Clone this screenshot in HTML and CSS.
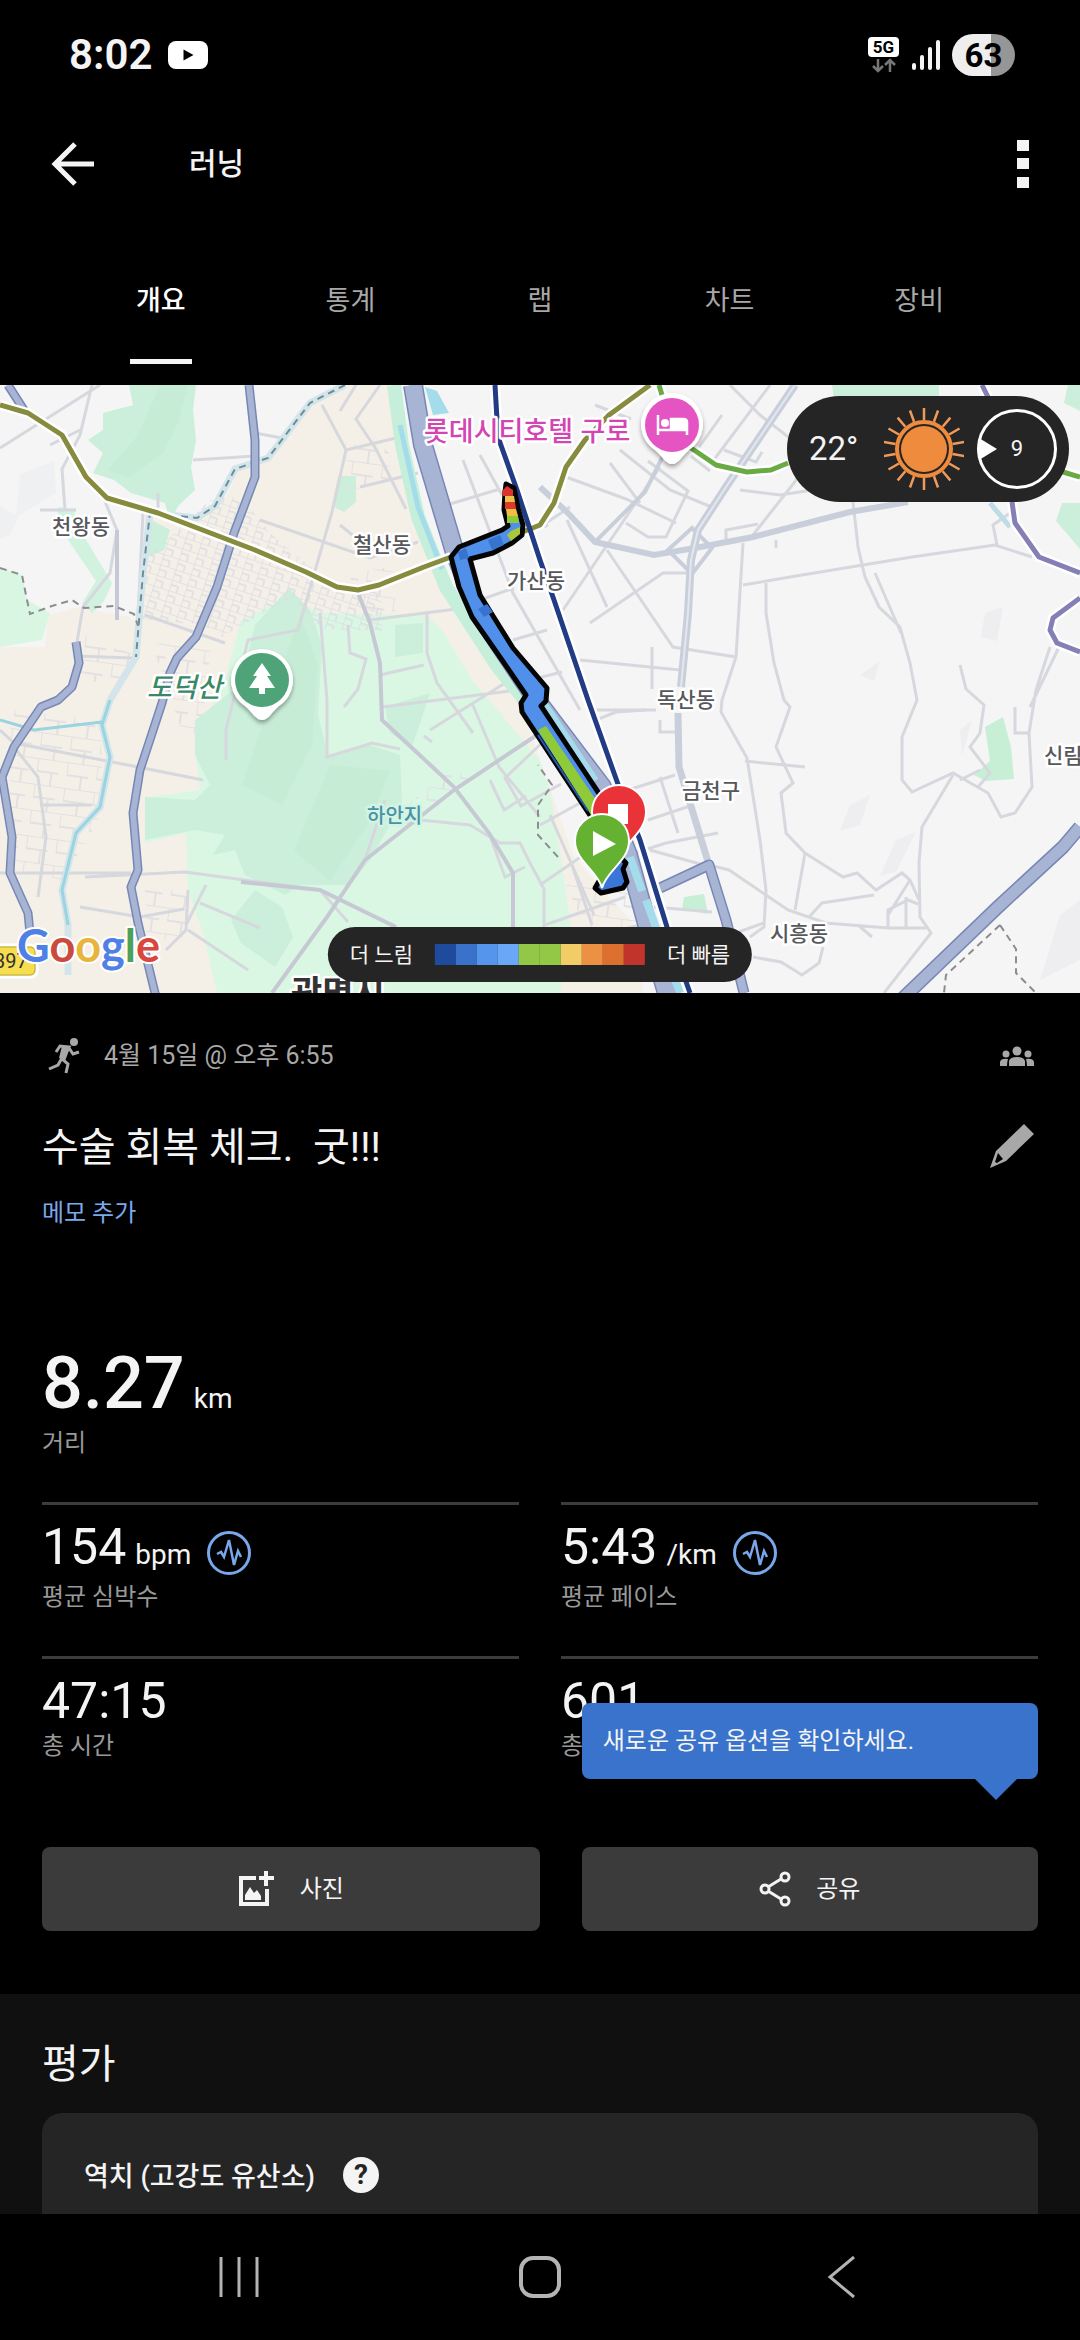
FILE: index.html
```html
<!DOCTYPE html>
<html lang="ko">
  <head>
    <meta charset="UTF-8">
    <meta name="viewport" content="width=device-width, initial-scale=1.0">
    <title>러닝</title>
    <link rel="stylesheet" href="styles.css">
  </head>
  <body>
    <div class="status-bar">
      <div class="status-left">
        <span class="clock">8:02</span>
        <svg width="40" height="28" viewBox="0 0 40 28"><rect width="40" height="28" rx="8" fill="#fff"/><path d="M15.500 8.500v11l10-5.500z" fill="#000"/></svg>
      </div>
      <div class="status-right">
        <svg class="network" width="32" height="36" viewBox="0 0 32 36">
          <rect width="31" height="20" rx="4" fill="#fff"/>
          <text class="network-text" x="15.500" y="16" text-anchor="middle">5G</text>
          <path d="M10 22v12M5 29l5 5 5-5M22 35V23M17 28l5-5 5 5" fill="none" stroke="#777" stroke-width="2.500"/>
        </svg>
        <svg width="28" height="30" viewBox="0 0 28 30"><path d="M2 25v3M10 17v11M18 9v19M26 2v26" stroke="#f4f4f4" stroke-width="4" stroke-linecap="round"/></svg>
        <span class="battery">63</span>
      </div>
    </div>

    <header class="app-bar">
      <button class="icon-btn" aria-label="뒤로">
        <svg width="44" height="44" viewBox="0 0 44 44"><path d="M43 22H5M24 2L4 22l20 20" fill="none" stroke="#f4f4f4" stroke-width="5"/></svg>
      </button>
      <h1>러닝</h1>
      <button class="icon-btn" aria-label="더보기">
        <svg width="12" height="48" viewBox="0 0 12 48"><path d="M0 0h12v11H0zM0 18h12v11H0zM0 37h12v11H0z" fill="#f4f4f4"/></svg>
      </button>
    </header>

    <nav class="tabs">
      <a class="tab active" href="#overview">개요</a>
      <a class="tab" href="#stats">통계</a>
      <a class="tab" href="#laps">랩</a>
      <a class="tab" href="#charts">차트</a>
      <a class="tab" href="#gear">장비</a>
    </nav>

    <section class="map">
      <svg class="map-canvas" viewBox="0 0 1080 608">
        <defs>
          <pattern id="streets" width="16" height="11" patternUnits="userSpaceOnUse" patternTransform="rotate(18)">
            <path d="M0 0h16M0 0v11M8 5v6M0 5h8" stroke="#dddde2" stroke-width="1.500" fill="none"/>
          </pattern>
          <pattern id="streets-wide" width="30" height="26" patternUnits="userSpaceOnUse" patternTransform="rotate(8)">
            <path d="M0 0h30M0 0v14M15 12v14M0 13h22" stroke="#e2e0e2" stroke-width="2" fill="none"/>
          </pattern>
          <filter id="shadow" x="-30%" y="-30%" width="160%" height="160%">
            <feDropShadow dx="0" dy="3" stdDeviation="2" flood-opacity="0.35"/>
          </filter>
        </defs>

        <rect width="1080" height="608" fill="#f5f5f6"/>

        <!-- land -->
        <path d="M0 608V262h45l3-32 32-8 48 10 12 8 5-112 55 7 25-20 15-35 28-5 42-57 35-18h44l24 128 31 74 72 103 58 167 59 66 10 70z" fill="#f5f0e7"/>
        <path d="M0 183l22 7 5 25 23 13-8 27-42 7z" fill="#d9f6e3"/>
        <path d="M129 0h67l-3 25 3 30-5 27 4 23-16 15-9 16-5-18-34-10-17-13-21-7 10-20-15-13 15-10V28l30-8z" fill="#cbefda"/>
        <path d="M160 0h28l-10 38-15 30-35 25-20-8 30-35z" fill="#c4ead3" opacity=".6"/>
        <path d="M58 122l16 2 2 14 36 60-8 18-12 12-10-10 14-22-38-56z" fill="#d0f2de"/>
        <path d="M148 133l22 12-6 20-18 8z" fill="#cbefda"/>
        <path d="M338 91l18 0 0 26-12 10-12-6z" fill="#cbefda"/>
        <path d="M289 212l31 16 107 2 17 18 28 47 68 80 10 30 11 67 10 70-11 66H217l-14-60-15-43-2-57-41 10 5-46 50-7-4-33 7-34 22-43 16-60z" fill="#daf7e4"/>
        <path d="M289 203l21 22 12 35-4 70 10 40 42-10 30 10 2 50-12 20-20 35-20 25h-50l-15 10-40-20-10-25-22 5 12-20-30-5-50 10v-43l50 3 15-15-15-30v-35l45-35 15-60z" fill="#cbefda"/>
        <path d="M300 230l18 50-6 80-30 60-40-20 20-60zM330 380l60 6-20 50-40 60-36-30z" fill="#c4ead3" opacity=".6"/>
        <path d="M255 505l27 17 11 30-18 30-34-24-10-23zM395 240l28-2v30l-28 4zM385 322l45-14-18 54-22-14z" fill="#cbefda"/>
        <path d="M832 0h107v14H834zM1068 0h12v26l-16-8zM1062 118h18v46l-24-28z" fill="#cbefda"/>
        <path d="M985 342l18-10 8 30 3 32-28 2-12-6 16-14zM684 512l20-3 4 20-26-5z" fill="#c6efd6"/>
        <path d="M850 420l20-10-10 30-20 6zM896 455l20-8-20 40-16 4zM960 345l12-10-10 36zM985 228l18-6-6 34-16-4zM860 290l20-14-6 20zM1060 530l20-15v60l-40 20z" fill="#eeeef0"/>
        <path d="M20 90l34-14 2 32-40 24zM0 120l18 12-8 18-10 4z" fill="#eff0f1"/>
        <path d="M140 180l80-74 26 12 24 30 72 60 40-2v40l-60-2-30-32-70 40-20-12-60-6z" fill="url(#streets)"/>
        <path d="M10 325l90 10 4 90-40 70-54-10zM145 500l45 8-8 50-36-6zM85 250l50 20-20 36-36-16zM395 430l60-48 14 12-60 50z" fill="url(#streets-wide)"/>
        <path d="M350 58l38 6 4 34-50 8zM348 188l44-6 4 44-26 6zM566 500l60-10 12 50-50 8zM152 260l60-10-10 100-20-4z" fill="url(#streets-wide)"/>

        <!-- minor roads -->
        <g fill="none" stroke="#d6d8de" stroke-width="3">
          <path d="M0 63L100 0M92 0L80 50l-18 34 3 41M50 60l30-15M103 112l14 33-7 43-27 34-6 35M40 125h36M158 108v22M193 75l62-4M255 48l32 6"/>
          <path d="M322 20l24 45-14 62-34 118-50 10-22 90 0 30M346 65l50-12M356 0l-16 26M380 0l-24 34 20 30 30 60M360 102l58-14M260 135l110 38 48-16M340 140l25 20"/>
          <path d="M143 128l-5 102-4 42-24 43M76 257l0 14 56 2M145 230l80 28M0 345l14 13 124 24 65 13M0 488h131M85 492l100-5 135 18M80 522l60 10 44-8M186 540l20-40M188 505l-2 40-20 20M40 420h52M14 362l24 30 8 60-8 60"/>
          <path d="M370 235l102-13M427 228v40l10 30 36 50M380 290l44-10M320 228l7 87v57l45-14 28 6M348 240l2 28 16 6-8 30-14 18M382 322l128-16M472 318l27 64 41 50M430 345l80-50M432 357l-8-6M420 435l50 5 30 18h20l10 20 14 26v40M489 448l16 44 20-10M490 395l14 30 22-14"/>
          <path d="M188 545l60 40M200 518l60 25M320 505l28 32M365 475l20-60M545 355l-40 38 16 28 40-22M540 440l40-22M540 500l64-44M550 430l44 100M572 480l20 60M545 540l80-28M560 560l80-20"/>
          <path d="M463 75l50 133 67 117M480 70l22 40M440 122l60-18M498 160l50-20M513 255l34-10M530 295l32-8M580 275l100 10M567 135l40 87M607 165l66 97 63 10M563 225L660 82M590 238l73-50h24M480 215l34-12M540 180l-12-30 42-28M652 262v42M596 325h60"/>
          <path d="M566 92l60 22 50 24M620 65l50 40 44 18M595 20l36 14M640 118l-30-40M626 138l22 14h18l22-46-40-30M730 0l30 30 36 28 10-4M724 65l32 12 6-10M770 0l-60 80M740 105l40 5 52-8M753 150l44-56M726 155v-10l32-6M776 155v8"/>
          <path d="M722 30l-30 42 18 14M875 188l26 60M997 160l-4-20 20-14M743 200l59-10 110-18 83-12 37 12M853 117l5 45 7 30 14 30 21 20 10 36 7 37-15 37v43l10 12 41-19 35 20 13 24 14-4 17-26-3-54 7-43 14-43M1060 260l-30 62"/>
          <path d="M953 390l-31 52-3 36 1 54 11 16-47 60M743 158l-7 114-14 43-1 12 26 46 13 82 6 50-2 37-14 10M766 198v30l8 50 10 37 6 7-14 40 17 36-12 10 5 40 19 20 38 24 14-4 19 17 26-17 8 7 9 20"/>
          <path d="M809 532l13-14 52-8M709 480l20 5 59 40 38 13 62 5h38M805 468l-10 57M753 572l28 5 21 13 17-12 4-16M654 522l58 5M730 550l34-12M745 376l60 6M888 543v-18l20-10 10 4M910 495l-22 35M906 512v30M858 540l14 12"/>
          <path d="M660 335v12h20M625 406l50-16M660 392l18 56M622 472l44-14 52-10M648 435l42-14M650 465l50 14M596 335l20-8 30-2M960 280l6 24 18 16-4 28-10 14 20 26-12 14M1015 322v26h14M960 395l20-10"/>
        </g>
        <g fill="none" stroke="#c6c8d3" stroke-width="4">
          <path d="M272 608l55-76 38-57 89-70 86-57M358 208l12 30 10 40 2 57 72 67 35 46 24 40v54M241 497l79 8 76 37M117 145l0 90"/>
        </g>
        <g fill="none" stroke="#c9cfda">
          <path d="M795 0l-42 62-27 40-28 43-7 30-3 53-7 74" stroke-width="8"/>
          <path d="M540 102l28 26 27 29 59 13 41-7 58-11 97-25 58-10" stroke-width="6"/>
          <path d="M678 328l1 54 30 98" stroke-width="7"/>
          <path d="M668 165l24-22 20 20-20 26z" stroke-width="4"/>
          <path d="M595 157l50-50 30-60" stroke-width="4"/>
        </g>
        <path d="M795 0l-42 62-27 40-28 43-7 30-3 53-7 74" fill="none" stroke="#e3e7ef" stroke-width="2"/>

        <!-- streams -->
        <g fill="none">
          <path d="M345 0l-35 18-42 55-18 6-15 5-20 37-18 12-47-5-7 60-7 84-26 43M110 315l-8 25 8 32-10 50-24 26-14 57 6 35v50" stroke="#d3e5ea" stroke-width="7"/>
          <path d="M110 315l-8 25 8 32-10 50-24 26-14 57 6 35M0 335l34 10 68-8" stroke="#99d4e0" stroke-width="3"/>
          <path d="M345 0l-35 18-42 55-18 6-15 5-20 37-18 12-47-5-7 60-7 84" stroke="#6b8f99" stroke-width="2" stroke-dasharray="7 5"/>
          <path d="M0 183l22 7 5 25 3 14 22-8 20-6 12 8 30-2 20 8 4 12M558 472l-20-22 0-30 14-20-14-20M1000 540l-54 50-2 18M1000 540l16 24v24l20 20" stroke="#8d8d8f" stroke-width="2" stroke-dasharray="7 5"/>
          <path d="M394 0l8 60 16 72 28 70 52 80 36 44" stroke="#c5efda" stroke-width="14"/>
          <path d="M400 40l18 82 24 62" stroke="#a4dceb" stroke-width="5"/>
          <path d="M425 2l12 4 12 22-16 2z" fill="#a5dceb"/>
          <path d="M990 118l20 24" stroke="#bddce6" stroke-width="5"/>
        </g>

        <!-- highways -->
        <g fill="none" stroke="#7787b5" stroke-linejoin="round">
          <path d="M413 0l10 60 32 108 25 62 60 90 62 82 26 68 22 80 18 62" stroke-width="20"/>
          <path d="M249 0l6 55v37l-21 56-17 54-21 50-19 21-7 15-8 30-22 67-7 43 5 57-7 17 7 36 18 74M76 257l3 21-7 24-14 13-17 7-27 40-12 30 10 60-2 36 18 40 2 20M8 0l16 25" stroke-width="9"/>
          <path d="M1080 442l-17 20-65 60-98 94" stroke-width="14"/>
          <path d="M660 503l49-23 17 55 18 73" stroke-width="11"/>
        </g>
        <g fill="none" stroke="#a7b4d3" stroke-linejoin="round">
          <path d="M413 0l10 60 32 108 25 62 60 90 62 82 26 68 22 80 18 62" stroke-width="17"/>
          <path d="M249 0l6 55v37l-21 56-17 54-21 50-19 21-7 15-8 30-22 67-7 43 5 57-7 17 7 36 18 74M76 257l3 21-7 24-14 13-17 7-27 40-12 30 10 60-2 36 18 40 2 20M8 0l16 25" stroke-width="6"/>
          <path d="M1080 442l-17 20-65 60-98 94" stroke-width="11"/>
          <path d="M660 503l49-23 17 55 18 73" stroke-width="8"/>
        </g>
        <path d="M543 318l52 78M630 472l12 34M646 515l34 93" stroke="#a5dceb" stroke-width="8" fill="none"/>

        <!-- subway lines -->
        <g fill="none" stroke="#fff" stroke-width="10">
          <path d="M0 20l28 8 34 22 24 42 21 21 51 15 97 37 51 22 31 15 21 3 21-5 45-18 27-10M520 148l20-8 14-22 12-36 19-27 24-25 41-30"/>
          <path d="M495 0l3 52 19 53 23 70 14 40 34 100 31 87 21 53 27 87 23 66"/>
          <path d="M659 0l6 20 26 43 25 17 31 7 24-2 17-7M1063 87l17 5"/>
          <path d="M982 0l6 12M1012 117l3 21 24 34 41 16M1080 213l-27 20-3 12 7 13 23 9"/>
        </g>
        <g fill="none" stroke-width="5" stroke-linejoin="round">
          <path d="M0 20l28 8 34 22 24 42 21 21 51 15 97 37 51 22 31 15 21 3 21-5 45-18 27-10M520 148l20-8 14-22 12-36 19-27 24-25 41-30" stroke="#868b3e"/>
          <path d="M495 0l3 52 19 53 23 70 14 40 34 100 31 87 21 53 27 87 23 66" stroke="#213c85"/>
          <path d="M659 0l6 20 26 43 25 17 31 7 24-2 17-7M1063 87l17 5" stroke="#6aaa44"/>
          <path d="M982 0l6 12M1012 117l3 21 24 34 41 16M1080 213l-27 20-3 12 7 13 23 9" stroke="#8480b5"/>
        </g>

        <!-- recorded track -->
        <g stroke-linejoin="round">
          <path d="M618 470l8 8-3 6 4 13-4 6-22 5-6-5 7-12z" fill="#3a76d8" stroke="#000" stroke-width="5"/>
          <path d="M506 99l8 4 4 20 5 17-1 10-10 8-19 10-23 6 10 36 33 53 34 40-1 13-5 5 61 92-9 22-71-108-1-9 5-8-24-35-30-43-13-30-8-30 8-10 43-17 6-4-4-16 1-18z" fill="#5090ea" stroke="#050505" stroke-width="5"/>
          <path d="M502 106l5-5 6 4v6h-10z" fill="#d9352c"/>
          <path d="M505 111h9l1 6h-10z" fill="#efc04c"/>
          <path d="M505 117h10l1 7h-11z" fill="#df3a26"/>
          <path d="M506 124h10l2 7h-11z" fill="#f0bd45"/>
          <path d="M507 131h11l1 7h-12z" fill="#8fca38"/>
          <path d="M511 146l9-4v7l-9 7-4-6z" fill="#a8c83a"/>
          <path d="M488 155l12-5 4 10-12 5zM458 167l8-4 3 10-9 2zM478 224l9-5 6 8-9 5z" fill="#3873cf"/>
          <path d="M538 345l8-4 52 77-7 12z" fill="#8fca38"/>
          <path d="M538 350l50 76" stroke="#275aa8" stroke-width="2" fill="none"/>
        </g>

        <!-- place labels -->
        <g class="place">
          <text x="52" y="149">천왕동</text>
          <text x="353" y="167">철산동</text>
          <text x="507" y="203">가산동</text>
          <text x="657" y="322">독산동</text>
          <text x="682" y="413">금천구</text>
          <text x="1044" y="378">신림동</text>
          <text x="770" y="556">시흥동</text>
          <text class="place-lake" x="367" y="438">하안지</text>
          <text class="place-hotel" x="424" y="56">롯데시티호텔 구로</text>
          <text class="place-hill" x="147" y="312">도덕산</text>
          <text class="place-city" x="291" y="620">광명시</text>
        </g>

        <g filter="url(#shadow)" fill="#fff">
          <path d="M672 79c-6 0-9-7-17-14a31 31 0 1 1 34 0c-8 7-11 14-17 14z"/>
          <path d="M262 335c-6 0-9-7-17-14a31 31 0 1 1 34 0c-8 7-11 14-17 14z"/>
        </g>
        <circle cx="672" cy="40" r="27" fill="#e455c3"/>
        <path d="M658 30v20M658 45h29M687 50V37q0-3-4-3h-12v10" fill="none" stroke="#fff" stroke-width="2.500"/>
        <path d="M671 34h13l3 3v8h-16z" fill="#fff"/>
        <circle cx="665" cy="38" r="4" fill="#fff"/>
        <circle cx="262" cy="295" r="27" fill="#4fa379"/>
        <path d="M262 278l9 13h-4l8 12h-10v6h-6v-6h-10l8-12h-4z" fill="#fff"/>

        <!-- finish and start pins -->
        <g stroke="#fff" stroke-width="2">
          <path d="M619 474c-4-16-27-26-27-47a27 27 0 0 1 54 0c0 21-23 31-27 47z" fill="#ea3338"/>
        </g>
        <path d="M608 419h20v20h-20z" fill="#fff"/>
        <path d="M602 503c-4-17-27-27-27-47a27 27 0 0 1 54 0c0 20-23 30-27 47z" fill="#65b132" stroke="#fff" stroke-width="2"/>
        <path d="M593 446v25l23-12z" fill="#fff"/>

        <rect x="-14" y="560" width="51" height="32" rx="6" fill="#f7dd50" stroke="#fff" stroke-width="3"/>
        <rect x="-14" y="562" width="49" height="28" rx="5" fill="none" stroke="#b9a640" stroke-width="1"/>
        <text class="route-no" x="-6" y="583">397</text>
        <text class="google" x="17" y="577"><tspan fill="#4f80e6">G</tspan><tspan fill="#ca4a3e">o</tspan><tspan fill="#e7b53c">o</tspan><tspan fill="#4f80e6">g</tspan><tspan fill="#4fa058">l</tspan><tspan fill="#d9463b">e</tspan></text>
      </svg>

      <div class="weather">
        <span class="temp">22°</span>
        <svg width="80" height="84" viewBox="-40 -42 80 84">
          <circle r="23" fill="#ef8b3c"/>
          <circle r="27" fill="none" stroke="#ef8b3c" stroke-width="4"/>
          <g stroke="#ef9a5a" stroke-width="2.500">
            <path d="M0-29v-12M0 29v12"/>
            <path d="M0-29v-12M0 29v12" transform="rotate(20)"/>
            <path d="M0-29v-12M0 29v12" transform="rotate(40)"/>
            <path d="M0-29v-12M0 29v12" transform="rotate(60)"/>
            <path d="M0-29v-12M0 29v12" transform="rotate(80)"/>
            <path d="M0-29v-12M0 29v12" transform="rotate(100)"/>
            <path d="M0-29v-12M0 29v12" transform="rotate(120)"/>
            <path d="M0-29v-12M0 29v12" transform="rotate(140)"/>
            <path d="M0-29v-12M0 29v12" transform="rotate(160)"/>
          </g>
        </svg>
        <div class="wind">
          <svg class="wind-arrow" width="20" height="22" viewBox="0 0 20 22"><path d="M2 0l18 11L2 22Q-1 11 2 0z" fill="#fff"/></svg>
          9
        </div>
      </div>

      <div class="legend">
        <span>더 느림</span>
        <div class="legend-bar">
          <i class="c1"></i><i class="c2"></i><i class="c3"></i><i class="c4"></i><i class="c5"></i><i class="c5"></i><i class="c6"></i><i class="c7"></i><i class="c8"></i><i class="c9"></i>
        </div>
        <span>더 빠름</span>
      </div>
    </section>

    <main class="details">
      <div class="meta">
        <svg width="36" height="36" viewBox="0 0 36 36">
          <circle cx="27" cy="4" r="4" fill="#a8a8a8"/>
          <path d="M9 14l4-6 9 1-7 12 6 5-2 9M22 10l4 6 6-2M15 20l-4 7-9 4" fill="none" stroke="#a8a8a8" stroke-width="3"/>
          <path d="M15 8l8 2-5 13-6-3z" fill="#a8a8a8"/>
        </svg>
        <span class="date">4월 15일 @ 오후 6:55</span>
        <svg class="privacy" width="34" height="20" viewBox="0 0 34 20">
          <g fill="#a8a8a8"><circle cx="17" cy="5" r="4.500"/><circle cx="6" cy="8" r="3.500"/><circle cx="28" cy="8" r="3.500"/><path d="M9 20v-5q1-4 8-4t8 4v5zM0 20v-4q1-4 8-3-1 3-1 7zM34 20v-4q-1-4-8-3 1 3 1 7z"/></g>
        </svg>
      </div>

      <div class="title-row">
        <h2>수술 회복 체크.&nbsp; 굿!!!</h2>
        <button class="icon-btn" aria-label="편집">
          <svg width="46" height="44" viewBox="0 0 46 44"><path fill-rule="evenodd" d="M35 0l10 10-28 27-16 7 6-17zM9 29l-3 9 2 1 6-4z" fill="#a8a8a8"/></svg>
        </button>
      </div>
      <a class="memo" href="#memo">메모 추가</a>

      <div class="distance">
        <div class="big"><strong>8.27</strong><small>km</small></div>
        <div class="label">거리</div>
      </div>

      <div class="stats">
        <div class="stat">
          <div class="value">
            <span>154<small>bpm</small></span>
            <svg class="pulse" width="44" height="44" viewBox="0 0 44 44"><circle cx="22" cy="22" r="20.500" fill="none" stroke="#78a7ea" stroke-width="3"/><path d="M10 23l4-2 3 5 5-17 5 25 4-14 3 6" fill="none" stroke="#78a7ea" stroke-width="2.500"/></svg>
          </div>
          <div class="label">평균 심박수</div>
        </div>
        <div class="stat">
          <div class="value">
            <span>5:43<small>/km</small></span>
            <svg class="pulse" width="44" height="44" viewBox="0 0 44 44"><circle cx="22" cy="22" r="20.500" fill="none" stroke="#78a7ea" stroke-width="3"/><path d="M10 23l4-2 3 5 5-17 5 25 4-14 3 6" fill="none" stroke="#78a7ea" stroke-width="2.500"/></svg>
          </div>
          <div class="label">평균 페이스</div>
        </div>
        <div class="stat">
          <div class="value"><span>47:15</span></div>
          <div class="label">총 시간</div>
        </div>
        <div class="stat">
          <div class="value"><span>601</span></div>
          <div class="label">총</div>
        </div>
      </div>

      <div class="actions">
        <div class="action photo">
          <button>
            <svg width="37" height="36" viewBox="0 0 37 36"><path d="M18 7H3v26h26V18M28 0v15M21 7h15" fill="none" stroke="#f4f4f4" stroke-width="4"/><path d="M7 29v-5l5-8 4 6 3-3 4 6v4z" fill="#f4f4f4"/></svg>
            사진
          </button>
        </div>
        <div class="action share">
          <button>
            <svg width="32" height="36" viewBox="0 0 32 36"><g fill="none" stroke="#f4f4f4" stroke-width="3"><circle cx="26" cy="6" r="4"/><circle cx="6" cy="18" r="4"/><circle cx="26" cy="30" r="4"/><path d="M9 16l13-8M9 20l13 8"/></g></svg>
            공유
          </button>
          <div class="tooltip">새로운 공유 옵션을 확인하세요.</div>
        </div>
      </div>
    </main>

    <section class="rating">
      <h2>평가</h2>
      <div class="card">
        <h3>역치 (고강도 유산소)</h3>
        <button class="help" aria-label="도움말">?</button>
      </div>
    </section>

    <nav class="system-nav">
      <button class="icon-btn" aria-label="최근 앱"><svg width="42" height="42" viewBox="0 0 42 42"><path d="M3 1v40M21 1v40M39 1v40" stroke="#b4b4b4" stroke-width="3"/></svg></button>
      <button class="icon-btn" aria-label="홈"><svg width="42" height="42" viewBox="0 0 42 42"><rect x="2" y="2" width="38" height="38" rx="12" fill="none" stroke="#b4b4b4" stroke-width="4"/></svg></button>
      <button class="icon-btn" aria-label="이전"><svg width="42" height="42" viewBox="0 0 42 42"><path d="M34 1L10 21l24 20" fill="none" stroke="#b4b4b4" stroke-width="3"/></svg></button>
    </nav>
  </body>
</html>
```

FILE: styles.css
```css
* {
  box-sizing: border-box;
}

body {
  margin: 0;
  min-height: 100vh;
  display: flex;
  flex-direction: column;
  background-color: #000;
  color: #f4f4f4;
  font-family: Roboto, "Noto Sans CJK KR", sans-serif;
  font-size: 24px;
  line-height: 30px;
}

h1, h2, h3 {
  margin: 0;
  font-weight: 500;
}

svg {
  display: block;
}

button {
  border: 0;
  padding: 0;
  background: none;
  color: inherit;
  font: inherit;
}

a {
  text-decoration: none;
}

/* status bar */
.status-bar {
  display: flex;
  justify-content: space-between;
  height: 110px;
  padding: 0 65px 0 69px;
}

.status-left, .status-right {
  display: flex;
  align-items: center;
}

.status-left {
  gap: 16px;
}

.status-right {
  gap: 12px;
}

.clock {
  font-size: 42px;
  line-height: 48px;
  font-weight: 600;
}

.network-text {
  font-size: 17px;
  font-weight: 700;
}

.battery {
  width: 63px;
  height: 42px;
  border-radius: 21px;
  background: linear-gradient(90deg, #eee 62%, #969696 62%);
  color: #000;
  font-size: 33px;
  line-height: 44px;
  font-weight: 700;
  text-align: center;
}

/* app bar */
.app-bar {
  display: flex;
  align-items: center;
  height: 108px;
  padding: 0 51px;
}

.app-bar h1 {
  flex: 1;
  padding-left: 94px;
  font-size: 30px;
  line-height: 40px;
}

.tabs {
  display: flex;
  height: 167px;
  padding: 0 66px;
}

.tab {
  position: relative;
  flex: 1;
  color: #a8a8a8;
  font-size: 27px;
  line-height: 167px;
  text-align: center;
}

.tab.active {
  color: #fff;
  font-weight: 500;
}

.tab.active::after {
  content: "";
  position: absolute;
  left: 50%;
  bottom: 21px;
  width: 62px;
  height: 5px;
  margin-left: -31px;
  background-color: #f4f4f4;
}

/* map */
.map {
  position: relative;
  overflow: hidden;
}

.map-canvas {
  width: 100%;
}

.place text {
  font-family: "Noto Sans CJK KR", sans-serif;
  font-size: 21px;
  font-weight: 500;
  fill: #56585c;
  stroke: #fff;
  stroke-width: 5px;
  stroke-linejoin: round;
  paint-order: stroke;
}

.place .place-lake {
  font-size: 20px;
  fill: #4793a5;
  stroke: #d3f4e4;
}

.place .place-hotel {
  font-size: 27px;
  fill: #d444b2;
}

.place .place-hill {
  font-size: 27px;
  font-style: italic;
  fill: #3b8868;
}

.place .place-city {
  font-size: 34px;
  font-weight: 700;
  fill: #333;
}

.route-no {
  font-size: 20px;
  fill: #333;
}

.google {
  font-family: Lato, sans-serif;
  font-size: 45px;
  font-weight: 700;
  stroke: #fff;
  stroke-width: 4px;
  stroke-linejoin: round;
  paint-order: stroke;
}

.weather {
  position: absolute;
  top: 11px;
  right: 11px;
  display: flex;
  align-items: center;
  height: 106px;
  padding: 0 12px 0 22px;
  border-radius: 53px;
  background-color: #252525;
}

.temp {
  width: 75px;
  font-size: 33px;
}

.wind {
  position: relative;
  width: 80px;
  height: 80px;
  margin-left: 13px;
  border: 3px solid #fff;
  border-radius: 50%;
  font-size: 22px;
  line-height: 74px;
  text-align: center;
}

.wind-arrow {
  position: absolute;
  left: -3px;
  top: 26px;
}

.legend {
  position: absolute;
  bottom: 11px;
  left: 50%;
  transform: translateX(-50%);
  display: flex;
  align-items: center;
  gap: 22px;
  height: 55px;
  padding: 0 22px;
  border-radius: 28px;
  background-color: #252525;
  font-size: 21px;
  white-space: nowrap;
}

.legend-bar {
  display: flex;
}

.legend-bar i {
  width: 21px;
  height: 21px;
}

.c1 { background-color: #1f4b9e; }
.c2 { background-color: #3a72cb; }
.c3 { background-color: #5595ec; }
.c4 { background-color: #6ba7f7; }
.c5 { background-color: #92c845; }
.c6 { background-color: #f2cd67; }
.c7 { background-color: #ec9143; }
.c8 { background-color: #dd702f; }
.c9 { background-color: #c1342c; }

/* activity details */
.details {
  padding: 45px 42px 63px;
}

.meta {
  display: flex;
  align-items: center;
  padding-left: 5px;
  color: #a8a8a8;
}

.date {
  flex: 1;
  padding-left: 21px;
  font-size: 25px;
}

.privacy {
  margin-right: 4px;
}

.title-row {
  display: flex;
  align-items: center;
  justify-content: space-between;
  margin: 46px 3px 26px 0;
}

.title-row h2, .rating h2 {
  font-size: 40px;
  line-height: 48px;
  font-weight: 400;
}

.title-row h2 {
  padding-top: 4px;
}

.memo {
  display: block;
  color: #7aa9ee;
}

.distance {
  margin-top: 120px;
  padding-bottom: 44px;
}

.big {
  margin-bottom: 8px;
  font-size: 72px;
  line-height: 72px;
}

.big strong {
  font-weight: 500;
}

.big small, .value small {
  margin-left: 9px;
  font-size: 28px;
  line-height: 28px;
}

.label {
  color: #999;
}

.stats {
  display: grid;
  grid-template-columns: 1fr 1fr;
  column-gap: 42px;
}

.stat {
  padding: 17px 0 44px;
  border-top: 3px solid #3c3c3c;
}

.value {
  display: flex;
  gap: 16px;
  margin-bottom: 5px;
  font-size: 50px;
  line-height: 50px;
}

.pulse {
  margin: 9px 0 2px;
}

.actions {
  display: flex;
  gap: 42px;
  margin-top: 42px;
}

.action {
  position: relative;
}

.photo {
  flex: 12;
}

.share {
  flex: 11;
}

.action button {
  display: flex;
  align-items: center;
  justify-content: center;
  gap: 25px;
  width: 100%;
  height: 84px;
  border-radius: 8px;
  background-color: #3b3b3b;
}

.tooltip {
  position: absolute;
  left: 0;
  right: 0;
  bottom: calc(100% + 68px);
  padding: 23px 21px;
  border-radius: 8px;
  background-color: #3973cb;
}

.tooltip::after {
  content: "";
  position: absolute;
  top: 100%;
  right: 21px;
  border: 21px solid transparent;
  border-top-color: #3973cb;
  border-bottom: 0;
}

/* rating */
.rating {
  flex: 1;
  display: flex;
  flex-direction: column;
  padding: 47px 42px 0;
  background-color: #101010;
}

.card {
  flex: 1;
  display: flex;
  align-items: flex-start;
  gap: 28px;
  margin-top: 24px;
  padding: 44px 42px 0;
  border-radius: 20px 20px 0 0;
  background-color: #252525;
}

.card h3 {
  font-size: 27px;
  line-height: 40px;
}

.help {
  width: 36px;
  height: 36px;
  border-radius: 50%;
  background-color: #f4f4f4;
  color: #252525;
  font-size: 28px;
  font-weight: 700;
}

.system-nav {
  display: flex;
  justify-content: space-around;
  align-items: center;
  height: 126px;
  padding: 0 88px;
}
```
